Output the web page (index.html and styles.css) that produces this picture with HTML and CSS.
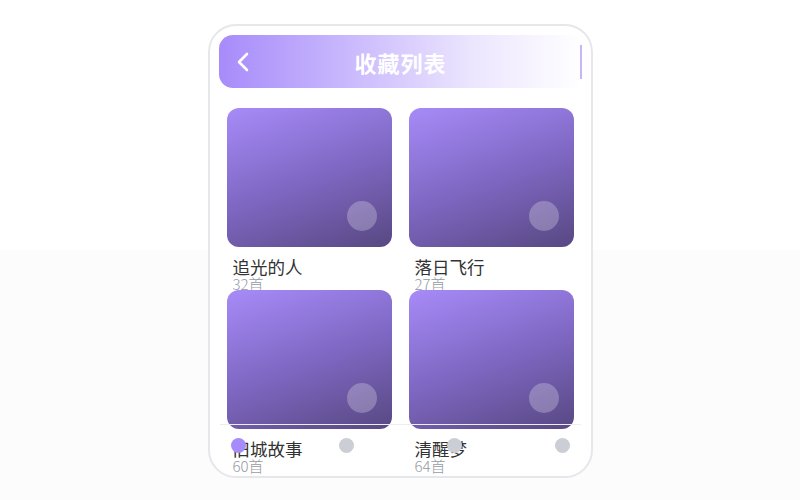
FILE: index.html
```html
<!DOCTYPE html>
<html>
	<head>
		<meta charset="utf-8">
		<link rel="stylesheet" href="styles.css">
		<title>收藏列表</title>
	</head>
	<body>
		<div class="phone">
			<div class="header">
				<svg class="back" width="14" height="20" viewBox="0 0 14 20"><path d="M11 2 L3 10 L11 18" fill="none" stroke="#fff" stroke-width="2.6" stroke-linecap="round" stroke-linejoin="round"/></svg>
				<span class="title">收藏列表</span>
				<span class="edge"></span>
			</div>
			<div class="grid">
				<div class="item">
					<div class="cover"><span class="play"></span></div>
					<div class="name">追光的人</div>
					<div class="count">32首</div>
				</div>
				<div class="item">
					<div class="cover"><span class="play"></span></div>
					<div class="name">落日飞行</div>
					<div class="count">27首</div>
				</div>
				<div class="item">
					<div class="cover"><span class="play"></span></div>
					<div class="name">旧城故事</div>
					<div class="count">60首</div>
				</div>
				<div class="item">
					<div class="cover"><span class="play"></span></div>
					<div class="name">清醒梦</div>
					<div class="count">64首</div>
				</div>
			</div>
			<div class="nav">
				<span class="dot active"></span>
				<span class="dot"></span>
				<span class="dot"></span>
				<span class="dot"></span>
			</div>
		</div>
	</body>
</html>
```

FILE: styles.css
```css
html, body {
	margin: 0;
	height: 100%;
}
body {
	background: linear-gradient(#ffffff 250px, #fcfcfd 250px);
	font-family: "Noto Sans CJK SC", "Noto Sans", sans-serif;
	padding-top: 24px;
	box-sizing: border-box;
}
.phone {
	position: relative;
	width: 364px;
	height: 441px;
	margin: 0 auto;
	border: 2px solid #e6e7eb;
	border-radius: 28px;
	background: #fff;
	overflow: hidden;
	padding: 9px 8px 0 9px;
}
.header {
	position: relative;
	height: 53px;
	border-radius: 14px;
	background: linear-gradient(90deg, #a78bfa 0%, #c9b8fd 35%, #ece6fe 70%, #ffffff 100%);
	display: flex;
	align-items: center;
	justify-content: center;
}
.back {
	position: absolute;
	left: 17px;
	top: 17px;
}
.title {
	color: #fff;
	font-size: 22px;
	font-weight: 700;
	letter-spacing: 1px;
}
.edge {
	position: absolute;
	right: 1px;
	top: 10px;
	width: 2px;
	height: 34px;
	background: #c7b5fc;
}
.grid {
	display: grid;
	grid-template-columns: 165px 165px;
	grid-auto-rows: 182px;
	column-gap: 17px;
	padding: 20px 8px 0 8px;
}
.item {
	height: 182px;
}
.cover {
	position: relative;
	height: 139px;
	border-radius: 12px;
	background: linear-gradient(160deg, #a78bf8 0%, #7f68c4 50%, #584882 100%);
}
.play {
	position: absolute;
	right: 15px;
	bottom: 16px;
	width: 30px;
	height: 30px;
	border-radius: 50%;
	background: rgba(255, 255, 255, 0.25);
}
.name {
	margin-top: 9px;
	padding-left: 6px;
	font-size: 17.5px;
	line-height: 22px;
	color: #333;
}
.count {
	padding-left: 6px;
	font-size: 15px;
	font-weight: 300;
	line-height: 11px;
	color: #959aa3;
}
.nav {
	position: absolute;
	left: 10px;
	right: 10px;
	top: 398px;
	border-top: 1px solid #eceef1;
	padding: 13px 10px 0 11px;
	display: flex;
	justify-content: space-between;
}
.dot {
	width: 15px;
	height: 15px;
	border-radius: 50%;
	background: #cbced4;
}
.dot.active {
	background: #a78bfa;
}
```
